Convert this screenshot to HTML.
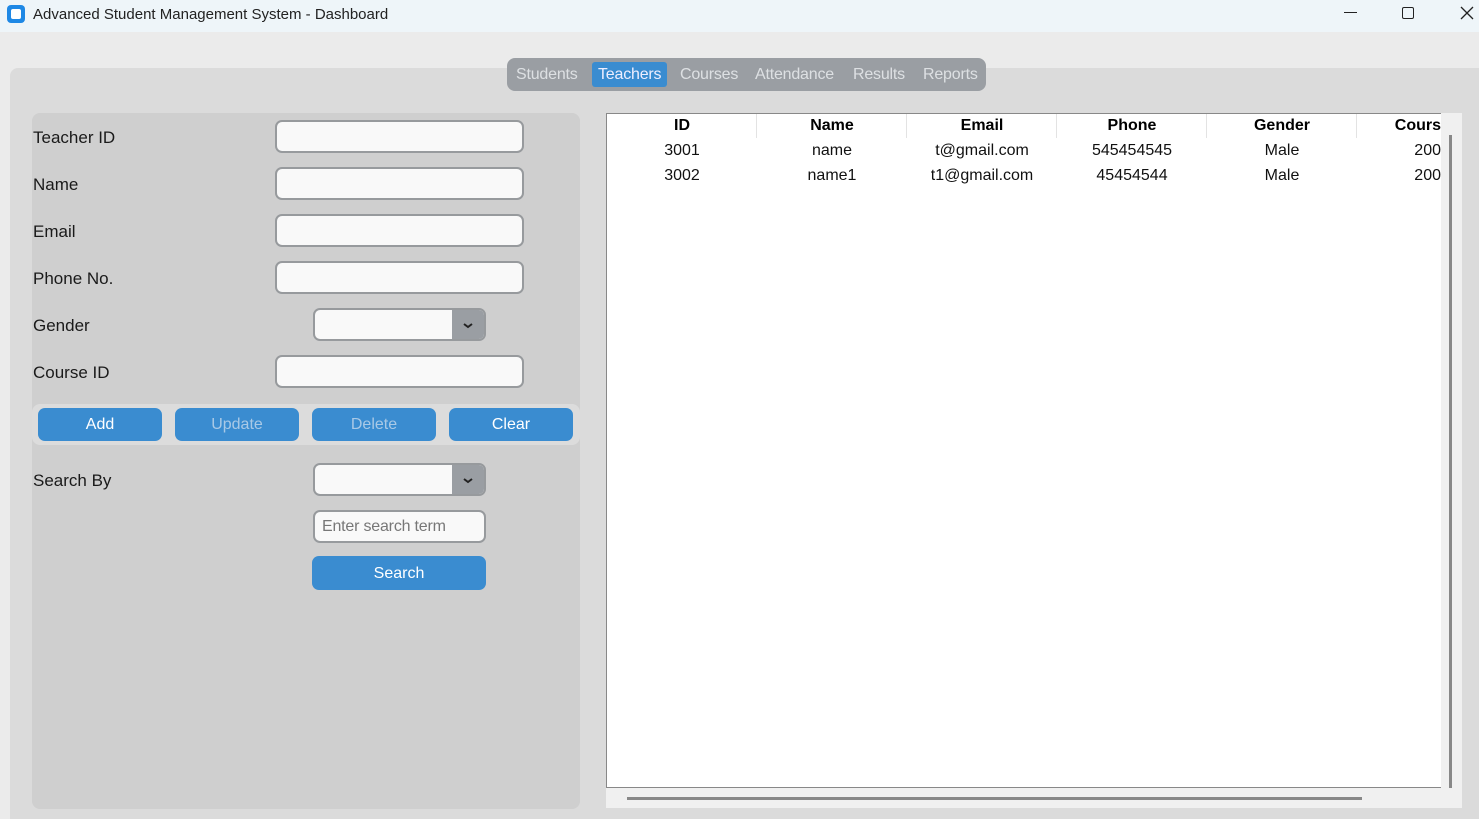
<!DOCTYPE html>
<html><head><meta charset="utf-8"><style>
*{margin:0;padding:0;box-sizing:border-box}
body{width:1479px;height:819px;overflow:hidden;background:#ebebeb;font-family:"Liberation Sans",sans-serif;position:relative}
.abs{position:absolute}
.title{left:0;top:0;width:1479px;height:32px;background:#eef5f9}
.lbl{position:absolute;left:33px;font-size:17px;color:#1a1a1a}
.ent{position:absolute;left:275px;width:249px;height:33px;background:#f9f9f9;border:2px solid #979a9d;border-radius:7px}
.combo{position:absolute;left:313px;width:173px;height:33px;background:#f9f9f9;border:2px solid #979a9d;border-radius:7px;overflow:hidden}
.combo .ar{position:absolute;right:0;top:0;width:32px;height:100%;background:#9a9ea3;text-align:center}
.btn{position:absolute;top:408px;width:124px;height:33px;background:#3a8cd0;border-radius:7px;color:#fff;font-size:16px;text-align:center;line-height:34px}
.th{position:absolute;top:117px;font-weight:bold;font-size:16px;text-align:center;width:150px}
.td{position:absolute;font-size:16px;text-align:center;width:150px;color:#111}
.tab{position:absolute;top:63px;height:25px;line-height:23px;font-size:16px;color:#dde0e3;letter-spacing:-0.2px}
</style></head><body>
<div class="abs title"></div>
<div class="abs" style="left:7px;top:5px;width:18px;height:18px;background:#1e88e5;border-radius:4px"><div style="margin:4px;width:10px;height:10px;background:#fff;border-radius:2px"></div></div>
<div class="abs" style="left:33px;top:6px;font-size:15px;color:#222">Advanced Student Management System - Dashboard</div>
<div class="abs" style="left:1344px;top:12px;width:13px;border-top:1px solid #222"></div>
<div class="abs" style="left:1402px;top:7px;width:12px;height:12px;border:1.5px solid #222;border-radius:2px"></div>
<svg class="abs" style="left:1460px;top:6px" width="14" height="14"><path d="M1 1L13 13M13 1L1 13" stroke="#222" stroke-width="1.3"/></svg>

<div class="abs" style="left:10px;top:68px;width:1469px;height:751px;background:#dbdbdb;border-radius:8px 0 0 0"></div>
<div class="abs" style="left:507px;top:58px;width:479px;height:33px;background:#9a9ea3;border-radius:8px"></div>
<div class="abs" style="left:592px;top:62px;width:75px;height:25px;background:#3a8cd0;border-radius:3px"></div>
<div class="tab" style="left:516px">Students</div>
<div class="tab" style="left:598px;color:#eef">Teachers</div>
<div class="tab" style="left:680px">Courses</div>
<div class="tab" style="left:755px">Attendance</div>
<div class="tab" style="left:853px">Results</div>
<div class="tab" style="left:923px">Reports</div>

<div class="abs" style="left:32px;top:113px;width:548px;height:696px;background:#cfcfcf;border-radius:8px"></div>
<div class="lbl" style="top:128px">Teacher ID</div>
<div class="lbl" style="top:175px">Name</div>
<div class="lbl" style="top:222px">Email</div>
<div class="lbl" style="top:269px">Phone No.</div>
<div class="lbl" style="top:316px">Gender</div>
<div class="lbl" style="top:363px">Course ID</div>
<div class="lbl" style="top:471px">Search By</div>
<div class="ent" style="top:120px"></div>
<div class="ent" style="top:167px"></div>
<div class="ent" style="top:214px"></div>
<div class="ent" style="top:261px"></div>
<div class="ent" style="top:355px"></div>
<div class="combo" style="top:308px"><div class="ar"><svg width="14" height="30"><path d="M3 14l4 3 4-3" stroke="#222" stroke-width="2" fill="none"/></svg></div></div>
<div class="combo" style="top:463px"><div class="ar"><svg width="14" height="30"><path d="M3 14l4 3 4-3" stroke="#222" stroke-width="2" fill="none"/></svg></div></div>
<div class="abs" style="left:32px;top:404px;width:548px;height:41px;background:#dcdcdc;border-radius:8px"></div>
<div class="btn" style="left:38px">Add</div>
<div class="btn" style="left:175px;color:#a9c9e6">Update</div>
<div class="btn" style="left:312px;color:#a9c9e6">Delete</div>
<div class="btn" style="left:449px">Clear</div>
<div class="abs" style="left:313px;top:510px;width:173px;height:33px;background:#f9f9f9;border:2px solid #979a9d;border-radius:7px;font-size:16px;color:#777;padding:6px 0 0 7px;letter-spacing:-0.2px">Enter search term</div>
<div class="btn" style="left:312px;top:556px;width:174px;height:34px;line-height:35px">Search</div>

<div class="abs" style="left:606px;top:113px;width:836px;height:675px;background:#fff;border:1px solid #888"></div>
<div class="abs" style="left:1441px;top:113px;width:21px;height:695px;background:#f0f0f0"></div>
<div class="abs" style="left:606px;top:788px;width:856px;height:20px;background:#f0f0f0"></div>
<div class="abs" style="left:1449px;top:135px;width:3px;height:653px;background:#888"></div>
<div class="abs" style="left:627px;top:797px;width:735px;height:3px;background:#888"></div>
<div class="abs" style="left:756px;top:114px;height:24px;border-left:1px solid #e3e3e3"></div>
<div class="abs" style="left:906px;top:114px;height:24px;border-left:1px solid #e3e3e3"></div>
<div class="abs" style="left:1056px;top:114px;height:24px;border-left:1px solid #e3e3e3"></div>
<div class="abs" style="left:1206px;top:114px;height:24px;border-left:1px solid #e3e3e3"></div>
<div class="abs" style="left:1356px;top:114px;height:24px;border-left:1px solid #e3e3e3"></div>
<div class="th" style="left:607px">ID</div>
<div class="th" style="left:757px">Name</div>
<div class="th" style="left:907px">Email</div>
<div class="th" style="left:1057px">Phone</div>
<div class="th" style="left:1207px">Gender</div>
<div class="th" style="left:1357px;width:84px;text-align:right;overflow:hidden;white-space:nowrap">Cours</div>
<div class="td" style="left:607px;top:142px">3001</div>
<div class="td" style="left:757px;top:142px">name</div>
<div class="td" style="left:907px;top:142px">t@gmail.com</div>
<div class="td" style="left:1057px;top:142px">545454545</div>
<div class="td" style="left:1207px;top:142px">Male</div>
<div class="td" style="left:1357px;top:142px;width:84px;text-align:right">200</div>
<div class="td" style="left:607px;top:167px">3002</div>
<div class="td" style="left:757px;top:167px">name1</div>
<div class="td" style="left:907px;top:167px">t1@gmail.com</div>
<div class="td" style="left:1057px;top:167px">45454544</div>
<div class="td" style="left:1207px;top:167px">Male</div>
<div class="td" style="left:1357px;top:167px;width:84px;text-align:right">200</div>
</body></html>
